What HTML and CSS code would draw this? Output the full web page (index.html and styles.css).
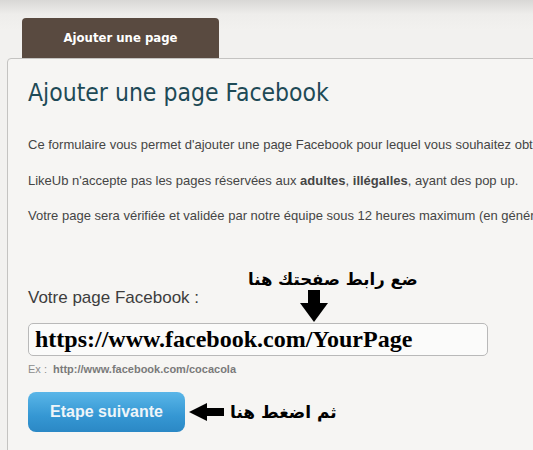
FILE: index.html
```html
<!DOCTYPE html>
<html lang="fr">
<head>
    <meta charset="UTF-8">
    <meta name="viewport" content="width=device-width, initial-scale=1.0">
    <title>Ajouter une page Facebook</title>
    <link rel="stylesheet" href="styles.css">
</head>
<body>
    <div class="page">
        <!-- Tab -->
        <div class="tab">Ajouter une page</div>

        <!-- Main panel -->
        <div class="panel">
            <h1>Ajouter une page Facebook</h1>

            <p>Ce formulaire vous permet d'ajouter une page Facebook pour lequel vous souhaitez obtenir des likes.</p>
            <p>LikeUb n'accepte pas les pages réservées aux <b>adultes</b>, <b>illégalles</b>, ayant des pop up.</p>
            <p>Votre page sera vérifiée et validée par notre équipe sous 12 heures maximum (en général moins).</p>

            <div class="field">
                <label for="pageUrl">Votre page Facebook :</label>
                <input type="text" id="pageUrl" value="https://www.facebook.com/YourPage">
                <div class="example">Ex : &nbsp;<b>http://www.facebook.com/cocacola</b></div>

                <!-- Annotation over the field -->
                <div class="hint-top">
                    <span dir="rtl" lang="ar">ضع رابط صفحتك هنا</span>
                    <svg class="arrow-down" width="28" height="32" viewBox="0 0 28 32">
                        <rect x="8" y="0" width="12" height="14" fill="#000"/>
                        <polygon points="0,13 28,13 14,32" fill="#000"/>
                    </svg>
                </div>
            </div>

            <div class="actions">
                <button>Etape suivante</button>
                <svg class="arrow-left" width="35" height="18" viewBox="0 0 35 18">
                    <polygon points="0,9 18,0 18,18" fill="#000"/>
                    <rect x="17" y="5" width="18" height="8" fill="#000"/>
                </svg>
                <span class="hint" dir="rtl" lang="ar">ثم اضغط هنا</span>
            </div>
        </div>
    </div>
</body>
</html>
```

FILE: styles.css
```css
body {
    margin: 0;
    padding: 0;
    background: linear-gradient(#d9d8d6 0, #eeedeb 14px, #f2f1ef 30px);
    font-family: "Liberation Sans", Arial, sans-serif;
    overflow: hidden;
}
.page {
    padding: 18px 0 0 7px;
}
.tab {
    width: 197px;
    height: 40px;
    margin-left: 15px;
    background-color: #594a40;
    border-radius: 4px 4px 0 0;
    color: #fff;
    font-family: "DejaVu Sans Condensed", "DejaVu Sans", sans-serif;
    font-weight: bold;
    font-size: 13px;
    line-height: 40px;
    text-align: center;
}
.panel {
    width: 600px;
    height: 400px;
    padding: 0 0 0 20px;
    background-color: #f6f5f3;
    border: 1px solid #c4c3c1;
    border-radius: 4px 0 0 0;
    white-space: nowrap;
}
.panel h1 {
    margin: 19px 0 29px 0;
    font-family: "DejaVu Sans Condensed", "DejaVu Sans", sans-serif;
    font-weight: normal;
    font-size: 24.5px;
    line-height: 30px;
    color: #1e4a56;
}
.panel p {
    margin: 0 0 20.5px 0;
    font-size: 13px;
    line-height: 15px;
    color: #454545;
}
.field {
    position: relative;
    margin-top: 65px;
}
.field label {
    display: block;
    font-size: 17px;
    line-height: 20px;
    color: #3d3d3d;
}
.field input {
    display: block;
    box-sizing: border-box;
    width: 460px;
    height: 33px;
    margin-top: 15px;
    padding: 0 6px;
    border: 1px solid #b9b9b9;
    border-radius: 5px;
    background-color: #fbfbfa;
    font-family: "Liberation Serif", "Times New Roman", serif;
    font-weight: bold;
    font-size: 24px;
    color: #000;
}
.example {
    margin-top: 7px;
    font-size: 11px;
    line-height: 13px;
    color: #8c8c8c;
}
.example b {
    color: #7a7a7a;
}
.hint-top {
    position: absolute;
    left: 220px;
    top: -19px;
    display: flex;
    flex-direction: column;
    align-items: flex-start;
}
.hint-top span {
    font-family: "DejaVu Sans", sans-serif;
    font-weight: bold;
    font-size: 16.5px;
    line-height: 22px;
    color: #000;
}
.arrow-down {
    display: block;
    margin: -1px 0 0 52px;
}
.actions {
    display: flex;
    align-items: center;
    margin-top: 16px;
}
.actions button {
    width: 157px;
    height: 40px;
    border: none;
    border-radius: 8px;
    background: linear-gradient(#5ab6e8, #3597d3 60%, #2b88c5);
    color: #eef5f9;
    font-family: "Liberation Sans", Arial, sans-serif;
    font-weight: bold;
    font-size: 16px;
    cursor: pointer;
}
.arrow-left {
    display: block;
    margin-left: 4px;
}
.hint {
    margin-left: 6px;
    font-family: "DejaVu Sans", sans-serif;
    font-weight: bold;
    font-size: 17px;
    color: #000;
}
```
